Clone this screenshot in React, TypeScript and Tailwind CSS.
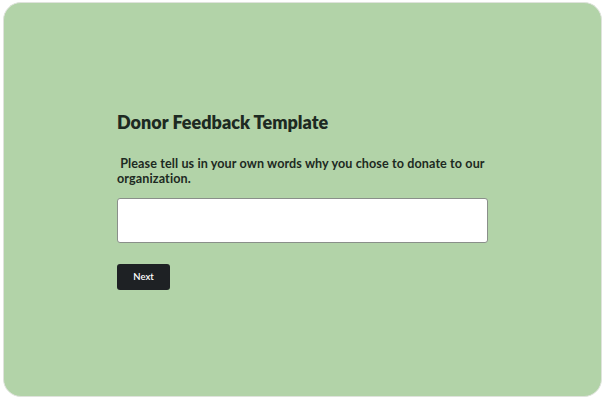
export default function App() {
  return (
    <div className="w-[605px] h-[400px] bg-white pt-[2px] pl-[3px]" style={{ fontFamily: 'Lato, "Liberation Sans", sans-serif' }}>
      <div className="w-[599px] h-[395px] rounded-[18px] border border-[#dfe3dc] bg-[#b2d3a8] pl-[113px] pt-[107px]">
        <h1 className="text-[18px] leading-[24px] font-extrabold text-[#1d2a22]">Donor Feedback Template</h1>
        <p className="mt-[22px] w-[380px] text-[12.6px] leading-[15px] font-bold text-[#1d2a22] tracking-[0.1px]">&nbsp;Please tell us in your own words why you chose to donate to our organization.</p>
        <div className="mt-[12px] w-[371px] h-[45px] rounded-[3px] border border-[#8a8f8a] bg-white" />
        <button className="mt-[21px] w-[53px] h-[26px] rounded-[3px] bg-[#1e2124] text-white text-[9.5px] font-semibold flex items-center justify-center">Next</button>
      </div>
    </div>
  );
}
